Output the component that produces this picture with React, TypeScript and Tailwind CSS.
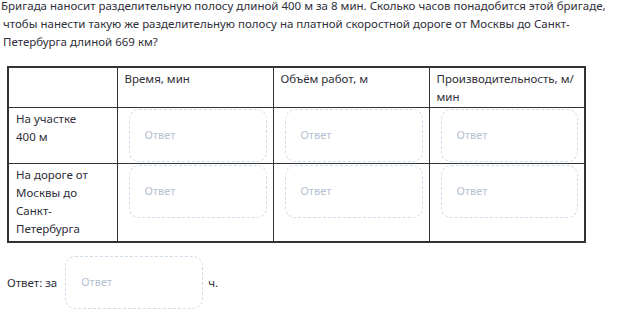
import React from "react";

const font = { fontFamily: '"Noto Sans", "DejaVu Sans", sans-serif' };

const columns = [["Время, мин"], ["Объём работ, м"], ["Производительность, м/", "мин"]];

const rows = [
  { label: ["На участке", "400 м"], height: "h-[56px]" },
  { label: ["На дороге от", "Москвы до", "Санкт-", "Петербурга"], height: "h-[79px]" },
];

// Пустое поле ответа с пунктирной рамкой
const AnswerBox: React.FC<{ className?: string }> = ({ className = "" }) => (
  <div
    className={`h-[53px] rounded-[10px] border border-dashed border-[#cfdcea] flex items-center pl-[15px] text-[11px] text-[#b5c2d3] ${className}`}
  >
    Ответ
  </div>
);

export default function App() {
  return (
    <div className="w-[624px] h-[334px] overflow-hidden bg-white text-[#2e2e38]" style={font}>
      {/* Условие задачи */}
      <div className="-mt-[3px] pl-[1px] text-[11.5px] leading-[18px] whitespace-nowrap">
        <div>Бригада наносит разделительную полосу длиной 400 м за 8 мин. Сколько часов понадобится этой бригаде,</div>
        <div className="pl-[2px]">чтобы нанести такую же разделительную полосу на платной скоростной дороге от Москвы до Санкт-</div>
        <div className="pl-[2px]">Петербурга длиной 669 км?</div>
      </div>

      {/* Таблица */}
      <table className="ml-[7px] mt-[15px] border-collapse border-2 border-[#333] text-[11.5px] leading-[18px]">
        <thead>
          <tr className="h-[40px]">
            <th className="w-[109px] border border-[#333]" />
            {columns.map((c) => (
              <th
                key={c[0]}
                className="w-[156px] border border-[#333] align-top text-left font-normal px-[7px] pt-[2px] whitespace-nowrap"
              >
                {c.map((l) => (
                  <div key={l}>{l}</div>
                ))}
              </th>
            ))}
          </tr>
        </thead>
        <tbody>
          {rows.map((r) => (
            <tr key={r.label.join(" ")} className={r.height}>
              <td className="border border-[#333] align-top px-[7px] pt-[2px]">
                {r.label.map((l) => (
                  <div key={l}>{l}</div>
                ))}
              </td>
              {columns.map((c) => (
                <td key={c[0]} className="border border-[#333] align-top pt-[1px] pl-[11px] pr-[6px]">
                  <AnswerBox />
                </td>
              ))}
            </tr>
          ))}
        </tbody>
      </table>

      {/* Строка ответа */}
      <div className="mt-[13px] ml-[7px] flex items-center text-[11.5px]">
        <span>Ответ: за</span>
        <AnswerBox className="w-[138px] ml-[8px]" />
        <span className="ml-[5px]">ч.</span>
      </div>
    </div>
  );
}
